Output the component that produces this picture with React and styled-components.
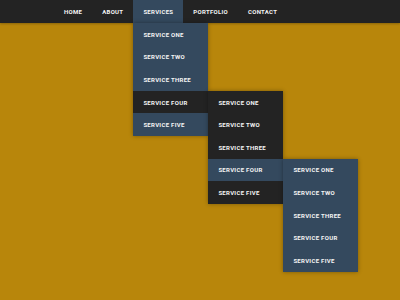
import React from 'react';
import styled, { createGlobalStyle } from 'styled-components';

const GlobalStyle = createGlobalStyle`
  html, body {
    margin: 0;
    padding: 0;
    background: #b8860b;
  }
  body {
    font-family: 'Roboto', 'Liberation Sans', sans-serif;
  }
`;

const dark = '#232323';
const blue = '#34495e';

const services = ['Service One', 'Service Two', 'Service Three', 'Service Four', 'Service Five'];

function App() {
  return (
    <>
      <GlobalStyle />
      <Page>
        <NavBar>
          <NavList>
            <NavItem>Home</NavItem>
            <NavItem>About</NavItem>
            <NavItem active>
              Services
              <Dropdown bg={blue}>
                {services.map((s, i) => (
                  <MenuItem key={s} hoverBg={i === 3 ? dark : null}>
                    {s}
                    {i === 3 && (
                      <SubMenu bg={dark}>
                        {services.map((s2, j) => (
                          <MenuItem key={s2} hoverBg={j === 3 ? blue : null}>
                            {s2}
                            {j === 3 && (
                              <SubMenu bg={blue}>
                                {services.map(s3 => (
                                  <MenuItem key={s3}>{s3}</MenuItem>
                                ))}
                              </SubMenu>
                            )}
                          </MenuItem>
                        ))}
                      </SubMenu>
                    )}
                  </MenuItem>
                ))}
              </Dropdown>
            </NavItem>
            <NavItem>Portfolio</NavItem>
            <NavItem>Contact</NavItem>
          </NavList>
        </NavBar>
      </Page>
    </>
  );
}

export default App;

const Page = styled.div`
  width: 400px;
  height: 300px;
  background: #b8860b;
  overflow: hidden;
`;

const NavBar = styled.nav`
  height: 23px;
  background: ${dark};
  padding-left: 54px;
  box-shadow: 0 1px 2px rgba(0, 0, 0, 0.25);
`;

const NavList = styled.ul`
  display: flex;
  margin: 0;
  padding: 0;
  list-style: none;
  height: 100%;
`;

const NavItem = styled.li`
  position: relative;
  display: flex;
  align-items: center;
  padding: 0 10px;
  height: 100%;
  font-size: 6px;
  font-weight: 700;
  letter-spacing: 0.3px;
  text-transform: uppercase;
  color: #f4f4f4;
  background: ${p => (p.active ? blue : 'transparent')};
`;

const Dropdown = styled.ul`
  position: absolute;
  top: 100%;
  left: 0;
  width: 75px;
  margin: 0;
  padding: 0;
  list-style: none;
  background: ${p => p.bg};
  box-shadow: 0 0 4px rgba(0, 0, 0, 0.35);
`;

const SubMenu = styled(Dropdown)`
  top: 0;
  left: 100%;
`;

const MenuItem = styled.li`
  position: relative;
  display: flex;
  align-items: center;
  height: 22.6px;
  padding: 0 10px;
  background: ${p => p.hoverBg || 'transparent'};
  white-space: nowrap;
`;
